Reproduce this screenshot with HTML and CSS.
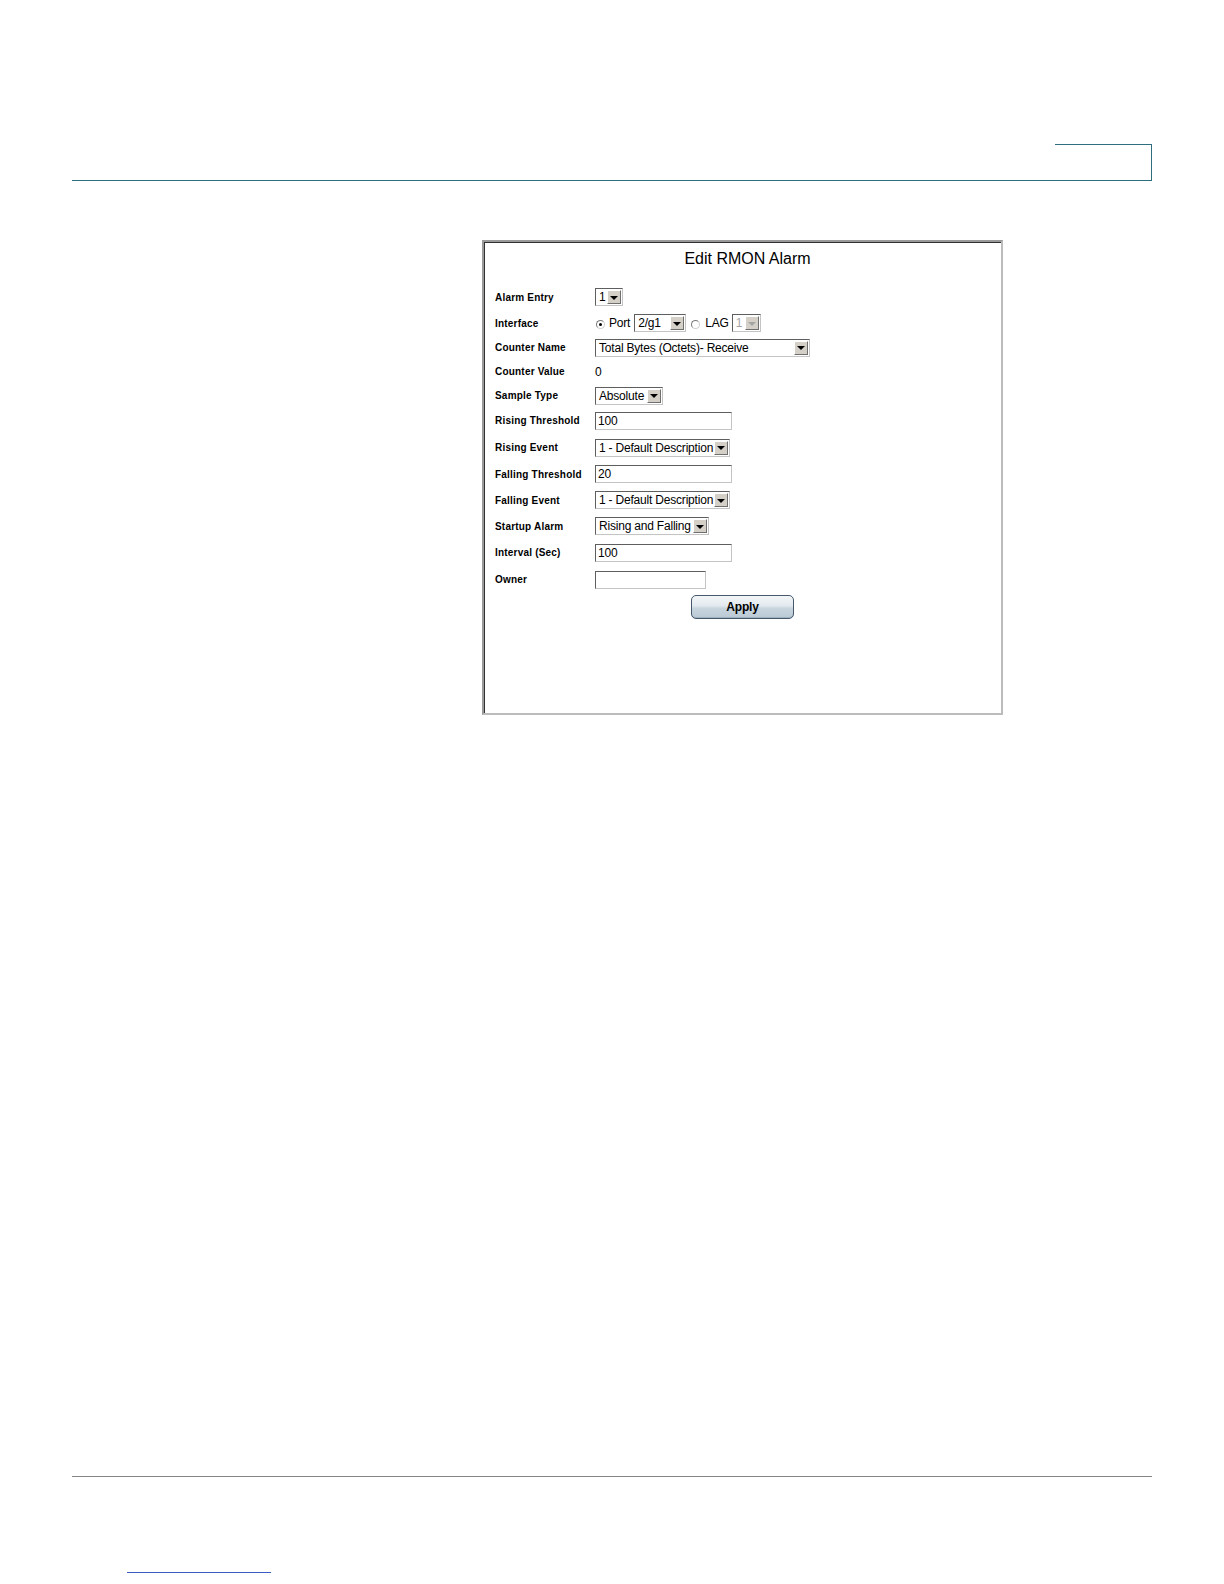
FILE: index.html
```html
<!DOCTYPE html>
<html lang="en">
<head>
<meta charset="utf-8">
<title>Edit RMON Alarm</title>
<link rel="stylesheet" href="styles.css">
</head>
<body>
<div class="page">
  <header class="header"><div class="tab"></div></header>
  <main class="main">
    <div class="dialog">
      <div class="title">Edit RMON Alarm</div>
      <div class="form">
        <div class="label">Alarm Entry</div>
        <div class="ctrl"><span class="select w-entry"><span class="val">1</span><span class="btn"><i class="tri"></i></span></span></div>

        <div class="label">Interface</div>
        <div class="ctrl iface">
          <span class="radio checked"></span><span class="txt port">Port</span>
          <span class="select w-port"><span class="val">2/g1</span><span class="btn"><i class="tri"></i></span></span>
          <span class="radio lag-radio"></span><span class="txt lag">LAG</span>
          <span class="select w-lag disabled"><span class="val">1</span><span class="btn"><i class="tri"></i></span></span>
        </div>

        <div class="label">Counter Name</div>
        <div class="ctrl"><span class="select w-counter"><span class="val">Total Bytes (Octets)- Receive</span><span class="btn"><i class="tri"></i></span></span></div>

        <div class="label">Counter Value</div>
        <div class="ctrl"><span class="txt value">0</span></div>

        <div class="label">Sample Type</div>
        <div class="ctrl"><span class="select w-sample"><span class="val">Absolute</span><span class="btn"><i class="tri"></i></span></span></div>

        <div class="label">Rising Threshold</div>
        <div class="ctrl"><span class="input w-field">100</span></div>

        <div class="label">Rising Event</div>
        <div class="ctrl"><span class="select w-event"><span class="val">1 - Default Description</span><span class="btn"><i class="tri"></i></span></span></div>

        <div class="label">Falling Threshold</div>
        <div class="ctrl"><span class="input w-field">20</span></div>

        <div class="label">Falling Event</div>
        <div class="ctrl"><span class="select w-event"><span class="val">1 - Default Description</span><span class="btn"><i class="tri"></i></span></span></div>

        <div class="label">Startup Alarm</div>
        <div class="ctrl"><span class="select w-startup"><span class="val">Rising and Falling</span><span class="btn"><i class="tri"></i></span></span></div>

        <div class="label">Interval (Sec)</div>
        <div class="ctrl"><span class="input w-field">100</span></div>

        <div class="label">Owner</div>
        <div class="ctrl"><span class="input w-owner"></span></div>
      </div>
      <div class="actions"><button class="apply" type="button">Apply</button></div>
    </div>
  </main>
  <footer class="footer"><span class="link-line"></span></footer>
</div>
</body>
</html>
```

FILE: styles.css
```css
html, body {
  margin: 0;
  padding: 0;
  background: #ffffff;
}

body {
  font-family: "Liberation Sans", Arial, sans-serif;
  color: #000000;
}

.page {
  width: 1224px;
  height: 1584px;
  overflow: hidden;
}

/* header rule with tab box */
.header {
  margin: 0 72px;
  padding-top: 144px;
  height: 36px;
  border-bottom: 1px solid #2f6e7e;
  display: flex;
  justify-content: flex-end;
}

.tab {
  width: 96px;
  height: 35px;
  border-top: 1px solid #2f6e7e;
  border-right: 1px solid #2f6e7e;
}

/* main area */
.main {
  height: 1295px;
  box-sizing: border-box;
  padding-top: 59px;
  padding-left: 482px;
}

.dialog {
  width: 521px;
  height: 475px;
  box-sizing: border-box;
  border: 2px solid;
  border-color: #9a9a9a #bcbcbc #bcbcbc #9a9a9a;
  box-shadow: inset 1px 1px 0 #303030;
  background: #ffffff;
}

.title {
  padding-top: 8px;
  padding-left: 10px;
  height: 18px;
  line-height: 18px;
  font-size: 16px;
  text-align: center;
  color: #000000;
}

.form {
  margin-top: 16px;
  margin-left: 11px;
  display: grid;
  grid-template-columns: 100px auto;
  grid-template-rows: 26px 26px 23px 25px 23px 27px 27px 26px 26px 26px 27px 27px;
}

.label {
  display: flex;
  align-items: center;
  font-size: 10px;
  font-weight: bold;
  letter-spacing: 0.2px;
  white-space: nowrap;
}

.ctrl {
  display: flex;
  align-items: center;
}

.txt {
  font-size: 12px;
  letter-spacing: -0.2px;
  line-height: 16px;
}

/* select boxes */
.select {
  display: flex;
  align-items: center;
  box-sizing: border-box;
  height: 18px;
  border: 1px solid;
  border-color: #5e5e5e #c4c4c4 #c4c4c4 #5e5e5e;
  background: #ffffff;
}

.select .val {
  flex: 1;
  padding-left: 3px;
  font-size: 12px;
  letter-spacing: -0.2px;
  line-height: 16px;
  white-space: nowrap;
  overflow: hidden;
}

.select .btn {
  width: 14px;
  height: 14px;
  box-sizing: border-box;
  margin-right: 1px;
  background: #d4d0c8;
  border: 1px solid;
  border-color: #ffffff #6f6f6f #6f6f6f #ffffff;
  display: flex;
  align-items: center;
  justify-content: center;
}

.tri {
  display: block;
  width: 0;
  height: 0;
  border-left: 4px solid transparent;
  border-right: 4px solid transparent;
  border-top: 4px solid #000000;
  margin-top: 1px;
}

.select.disabled .val {
  color: #a4a4a4;
}

.select.disabled .tri {
  border-top-color: #a4a4a4;
}

.w-entry { width: 28px; }
.w-port { width: 52px; margin-left: 4px; }
.w-lag { width: 29px; margin-left: 3px; }
.w-counter { width: 215px; }
.w-sample { width: 68px; }
.w-event { width: 135px; }
.w-startup { width: 114px; }

/* radios */
.radio {
  width: 9px;
  height: 9px;
  box-sizing: border-box;
  border: 1px solid;
  border-color: #7a7a7a #cfcfcf #cfcfcf #7a7a7a;
  border-radius: 50%;
  background: #ffffff;
  margin-top: 3px;
  display: flex;
  align-items: center;
  justify-content: center;
}

.radio.checked::after {
  content: "";
  width: 3px;
  height: 3px;
  border-radius: 50%;
  background: #000000;
}

.iface .radio.checked {
  margin-left: 1px;
}

.port {
  margin-left: 4px;
}

.lag-radio {
  margin-left: 5px;
}

.lag {
  margin-left: 5px;
}

/* text inputs */
.input {
  display: block;
  box-sizing: border-box;
  height: 18px;
  border: 1px solid;
  border-color: #5e5e5e #c4c4c4 #c4c4c4 #5e5e5e;
  padding-left: 2px;
  font-size: 12px;
  letter-spacing: -0.2px;
  line-height: 16px;
  background: #ffffff;
}

.w-field { width: 137px; }
.w-owner { width: 111px; }

/* apply */
.actions {
  margin-top: 2px;
  display: flex;
  justify-content: center;
}

.apply {
  width: 103px;
  height: 24px;
  padding: 0;
  border: 1px solid #46586a;
  border-radius: 5px;
  background: linear-gradient(#f3f6f8 0%, #e2e9ee 45%, #c8d5de 55%, #b9c9d5 100%);
  box-shadow: inset 0 -1px 0 #9fb2c0;
  font-family: "Liberation Sans", Arial, sans-serif;
  font-size: 12px;
  font-weight: bold;
  letter-spacing: -0.2px;
  color: #000000;
}

/* footer */
.footer {
  margin: 0 72px;
  border-top: 1px solid #858585;
  height: 107px;
}

.link-line {
  display: block;
  margin-left: 55px;
  margin-top: 95px;
  width: 144px;
  height: 1px;
  background: #3b5bc4;
}
```
